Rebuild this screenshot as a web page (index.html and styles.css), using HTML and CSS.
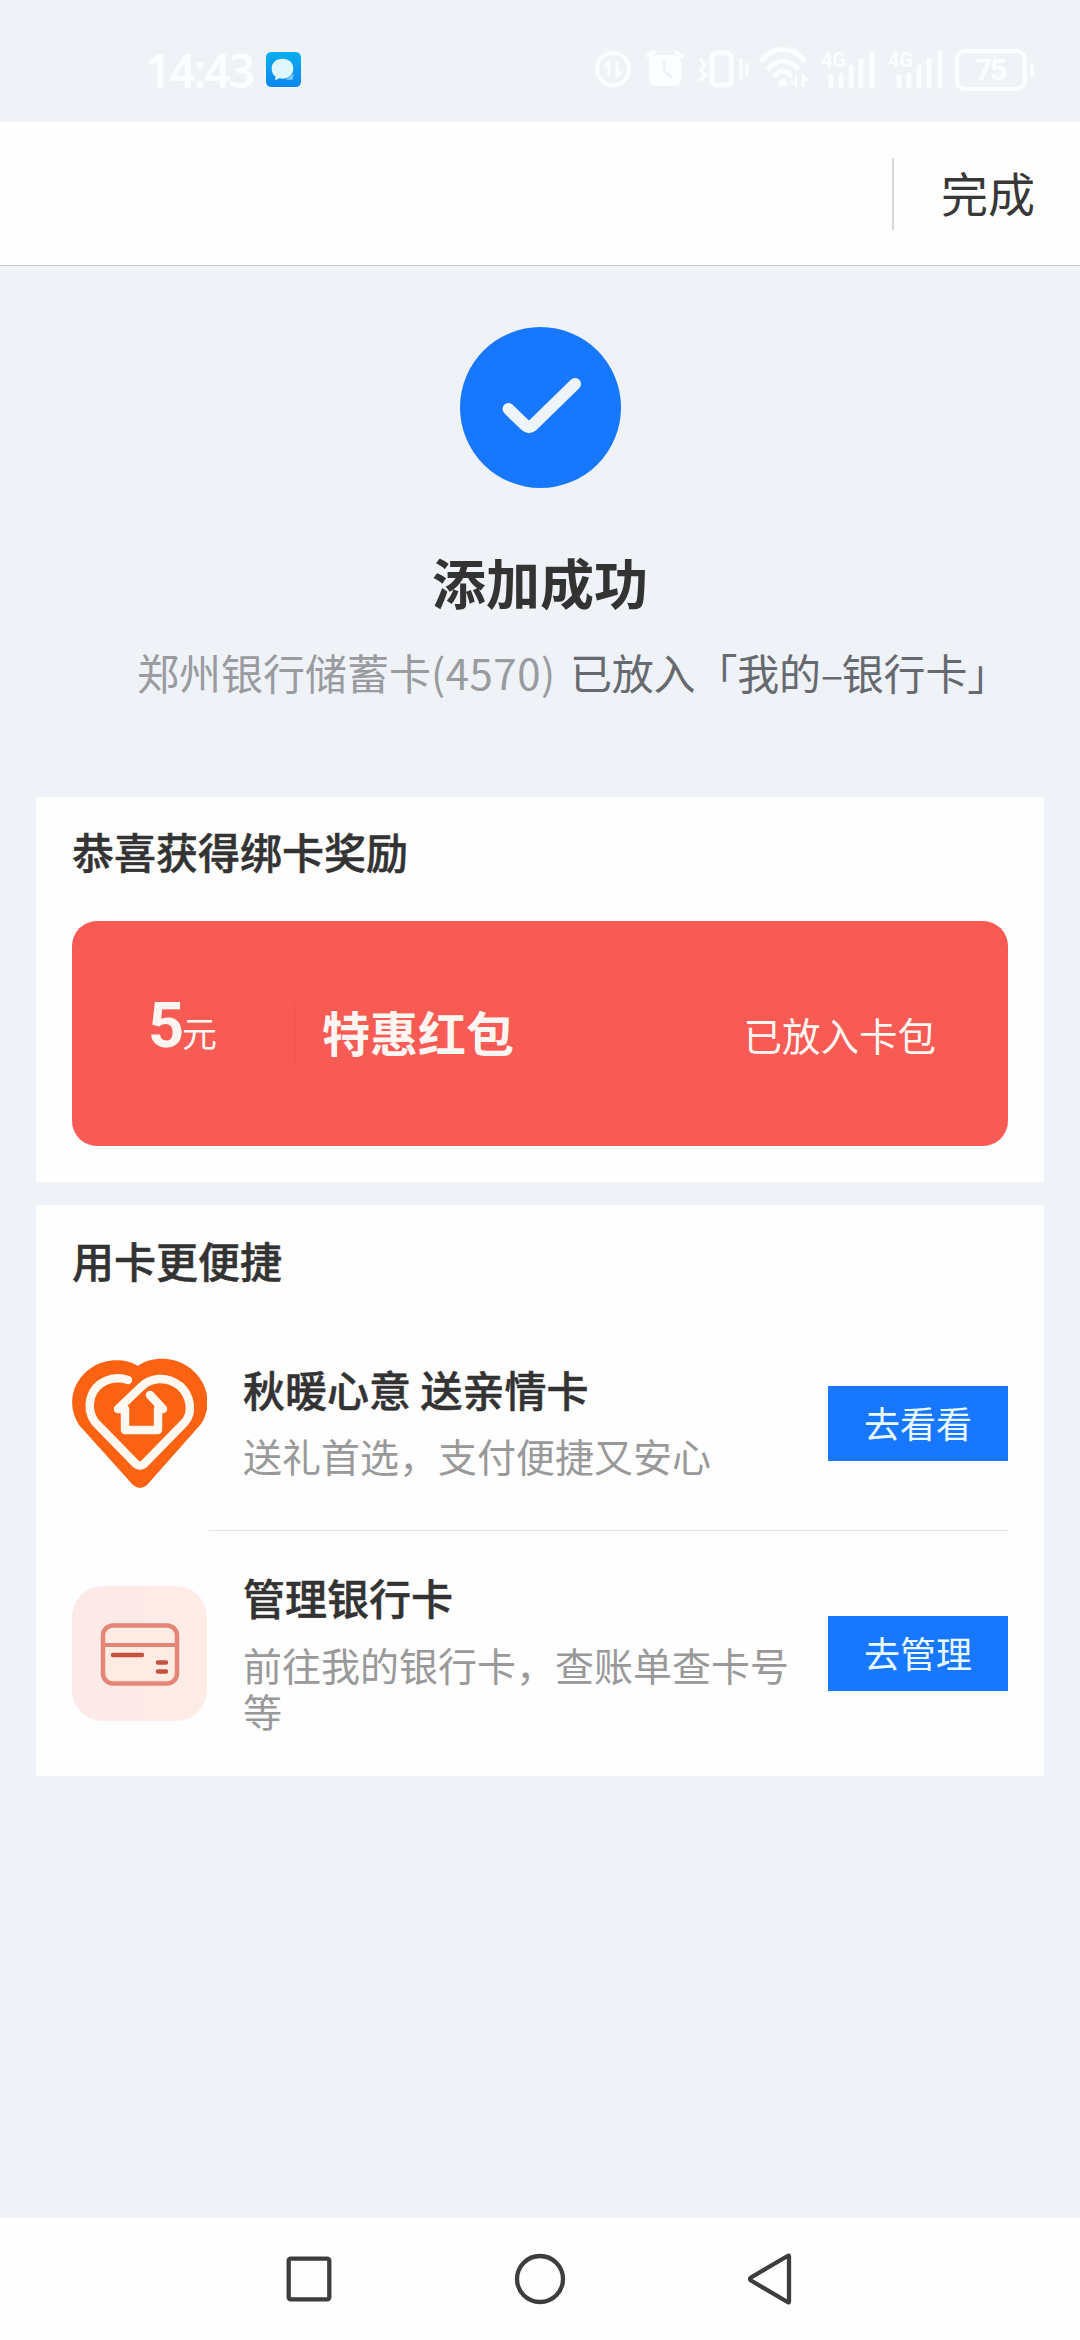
FILE: index.html
```html
<!DOCTYPE html>
<html lang="zh-CN">
<head>
<meta charset="utf-8">
<title>添加成功</title>
<link rel="stylesheet" href="styles.css">
</head>
<body>
<div class="screen">
  <div class="status">
    <span class="time">14:43</span>
    <svg class="msg-app" viewBox="0 0 34 34">
      <defs><linearGradient id="msg" x1="0" y1="0" x2="0" y2="1"><stop offset="0" stop-color="#08aef0"/><stop offset="1" stop-color="#0b86f0"/></linearGradient></defs>
      <rect width="34" height="34" rx="5" fill="url(#msg)"/>
      <path d="M19 27h7l1-6z" fill="#7cc4fa"/>
      <path d="M16 6.500c-6 0-10.500 4-10.500 9.500 0 4 1.500 6.500 4 8l-1 3c2-.1 3.500-.6 4.500-1.500 1 .3 2 .4 3 .4 6 0 10.500-4 10.500-9.900S22 6.500 16 6.500z" fill="#dff6fd"/>
    </svg>
    <svg class="indicators" viewBox="0 0 450 46" fill="none" stroke="#fcfdfe" stroke-linecap="round">
      <circle cx="21" cy="23" r="16" stroke-width="4"/>
      <path d="M17 30V16l-4 4M25 16v14l4-4" stroke-width="3"/>
      <path d="M57 16Q57 9 64 9H82Q89 9 89 16V33Q89 40 82 40H64Q57 40 57 33Z" fill="#fcfdfe" stroke="none"/>
      <path d="M56 10l6-4M90 10l-6-4" stroke-width="4"/>
      <path d="M72 15v10l7 6" stroke="#eff2f7" stroke-width="3"/>
      <rect x="120" y="7" width="19" height="32" rx="4" stroke-width="5"/>
      <path d="M109 14l4 5-4 5 4 5-4 5M149 14v18" stroke-width="3.500"/>
      <path d="M155 18v10" stroke-width="3"/>
      <path d="M167 18c12-14 30-14 42 0M174 26c8-9 20-9 28 0M181 33c4-5 10-5 14 0" transform="translate(3 -4)" stroke-width="5"/>
      <circle cx="191" cy="37" r="4" fill="#fcfdfe" stroke="none"/>
      <path d="M204 30v10l-4-4M211 40V30l4 4" stroke-width="2.500"/>
      <g stroke-width="5">
        <path d="M239 30v10M249 29v11M259 21v19M269 14v26M280 7v33"/>
        <path d="M307 30v10M317 29v11M327 21v19M337 14v26M348 7v33"/>
      </g>
      <g class="net-label"><text x="229" y="21" textLength="25">4G</text><text x="296" y="21" textLength="25">4G</text></g>
      <rect x="365" y="5" width="68" height="38" rx="8" stroke-width="4"/>
      <path d="M440 19v10" stroke-width="4"/>
      <text class="battery-label" x="383" y="34" textLength="32">75</text>
    </svg>
  </div>

  <div class="header"><span class="done">完成</span></div>

  <div class="result">
    <svg class="success" viewBox="0 0 161 161">
      <circle cx="80.500" cy="80.500" r="80.500" fill="#1777ff"/>
      <path d="M48.500 82L65.500 98.500Q69 101.500 72.500 98.500L115 57" fill="none" stroke="#eff4fb" stroke-width="12" stroke-linecap="round" stroke-linejoin="round"/>
    </svg>
    <h1>添加成功</h1>
    <p><span class="card-name">郑州银行储蓄卡<span class="digits">(4570)</span></span><span class="placed">已放入「我的<span class="dash">–</span>银行卡」</span></p>
  </div>

  <section class="reward">
    <h2>恭喜获得绑卡奖励</h2>
    <div class="coupon">
      <div class="amount"><b>5</b><span>元</span></div>
      <div class="coupon-name">特惠红包</div>
      <div class="coupon-state">已放入卡包</div>
    </div>
  </section>

  <section class="services">
    <h2>用卡更便捷</h2>
    <div class="service first">
      <svg class="service-icon" viewBox="0 0 135 135" fill="none">
        <path d="M66 8C78 -1 100 -2 115 8C135 21 142 46 129 66L75 127Q68 133 61 127L7 67C-6 47 0 23 19 10C33 0 54 0 66 8Z" fill="#fb6212"/>
        <g stroke="#fff8f0" stroke-width="8.500" stroke-linejoin="round" stroke-linecap="round">
          <path d="M56 22C40 17 24 24 19 39C16 49 18 57 23 64L63 105Q68 110 73 105L113 64C121 55 119 38 108 28C94 17 78 20 69 29L46 51H53V72H86V51H91L78 37"/>
        </g>
      </svg>
      <div class="service-text">
        <h3>秋暖心意 送亲情卡</h3>
        <p>送礼首选，支付便捷又安心</p>
      </div>
      <div class="button">去看看</div>
    </div>
    <div class="service second">
      <svg class="service-icon" viewBox="0 0 135 135" fill="none">
        <defs><linearGradient id="tile" x1="0" y1="0" x2="1" y2="0"><stop offset="0" stop-color="#fde9e9"/><stop offset="1" stop-color="#feece6"/></linearGradient></defs>
        <rect width="135" height="135" rx="31" fill="url(#tile)"/>
        <rect x="31" y="39.500" width="74" height="58" rx="10" fill="#feece4" stroke="#e48577" stroke-width="4.500"/>
        <path d="M31 59H105" stroke="#e48577" stroke-width="4"/>
        <path d="M41 69H70M86 76.500H94M86 85.500H94" stroke="#c75143" stroke-width="4.500" stroke-linecap="round"/>
      </svg>
      <div class="service-text">
        <h3>管理银行卡</h3>
        <p>前往我的银行卡，查账单查卡号等</p>
      </div>
      <div class="button">去管理</div>
    </div>
  </section>

  <div class="nav">
    <svg viewBox="0 0 54 54"><rect x="6.700" y="6.700" width="40.600" height="40.600" rx="2"/></svg>
    <svg viewBox="0 0 54 54"><circle cx="27" cy="27" r="23"/></svg>
    <svg viewBox="0 0 54 54"><path d="M45 4.500V49.500Q45 51 43.500 50L7 28.500Q5 27 7 25.500L43.500 4Q45 3 45 4.500Z"/></svg>
  </div>
</div>
</body>
</html>
```
FILE: styles.css
```css
* { box-sizing: border-box; margin: 0; padding: 0; }
body {
  width: 1080px;
  height: 2340px;
  background: #eff2f7;
  font-family: "Noto Sans CJK SC", sans-serif;
  color: #333;
}
.screen { display: flex; flex-direction: column; height: 2340px; }
svg { display: block; flex: none; }

.status { display: flex; align-items: flex-start; height: 122px; padding-left: 145px; color: #fcfdfe; }
.time { width: 121px; padding-top: 40px; font: 600 46px/60px "Noto Sans", sans-serif; letter-spacing: -2px; white-space: nowrap; }
.msg-app { width: 35px; height: 35px; margin-top: 52px; }
.indicators { width: 450px; height: 46px; margin: 46px 0 0 280px; }
.net-label, .battery-label { fill: #fcfdfe; stroke: none; font-family: Roboto, sans-serif; font-weight: 700; }
.net-label { font-size: 20px; }
.battery-label { font-size: 30px; }
.status .indicators { margin-left: 291px; }

.header {
  display: flex;
  align-items: center;
  justify-content: flex-end;
  height: 144px;
  padding-right: 45px;
  background: #fefefe;
  border-bottom: 1px solid #c9c9c9;
}
.done { height: 72px; padding-left: 47px; border-left: 2px solid #d8d8d8; font-size: 47px; line-height: 67px; color: #383838; }

.result { display: flex; flex-direction: column; align-items: center; height: 531px; padding-top: 61px; }
.success { width: 161px; height: 161px; }
h1 { margin-top: 58px; font-size: 54px; font-weight: 700; line-height: 72px; }
.result p { display: flex; align-self: stretch; margin-top: 23px; padding-left: 137px; font-size: 42px; line-height: 62px; white-space: nowrap; }
.card-name { width: 433px; color: #999b9f; }
.digits { letter-spacing: 0.5px; }
.placed { color: #66696e; letter-spacing: -0.2px; }
.dash { display: inline-block; width: 21px; text-align: center; }

section { margin: 0 36px; background: #fefefe; }
h2 { font-size: 42px; font-weight: 500; line-height: 60px; -webkit-text-stroke: .5px #333; }

.reward { height: 385px; padding: 24px 36px 0; }
.coupon { display: flex; align-items: center; height: 225px; margin-top: 40px; background: #f75b54; border-radius: 25px; color: #fff6f2; }
.amount { display: flex; align-items: baseline; width: 223px; height: 60px; padding-left: 76px; border-right: 1px solid #ef524c; line-height: 50px; }
.amount b { width: 34px; font: 700 63px/44px Roboto, sans-serif; }
.amount span { font-size: 35px; }
.coupon-name { flex: 1; padding: 0 0 6px 27px; font-size: 48px; font-weight: 700; line-height: 70px; }
.coupon-state { padding: 0 72px 0 0; font-size: 38.5px; line-height: 56px; }

.services { height: 571px; margin-top: 23px; padding: 25px 36px 0; }
.service { display: flex; align-items: flex-start; }
.service-icon { width: 135px; height: 135px; }
.service-text { width: 549px; margin: 0 36px; }
h3 { font-size: 42px; font-weight: 500; line-height: 60px; -webkit-text-stroke: .5px #333; }
.service p { font-size: 39px; line-height: 46px; color: #999; }
.button { width: 180px; height: 75px; background: #1777ff; color: #e9fbff; font-size: 36px; line-height: 73px; text-align: center; }
.first { height: 241px; padding-top: 66px; background: linear-gradient(#e3e3e3, #e3e3e3) right bottom / 799px 1px no-repeat; }
.first .service-icon { margin-top: 2px; }
.first .service-text { padding-top: 3px; }
.first p { margin-top: 13px; }
.first .button { margin-top: 30px; }
.second { padding-top: 55px; }
.second .service-text { width: 548px; margin-top: -19px; margin-right: 0; padding-right: 2px; }
.second .button { margin: 30px 0 0 37px; }
.second p { margin-top: 14px; }

.nav { display: flex; justify-content: center; align-items: center; gap: 177px; height: 122px; margin-top: auto; background: #fefefe; }
.nav svg { width: 54px; height: 54px; fill: none; stroke: #3d3d3d; stroke-width: 4.300; stroke-linejoin: round; }
```
